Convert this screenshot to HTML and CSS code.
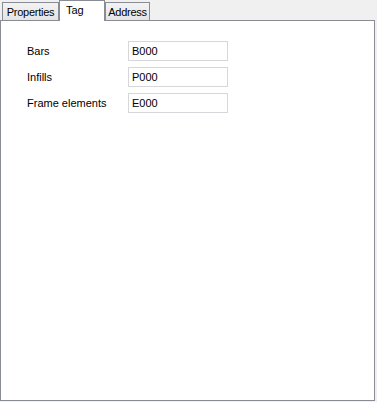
FILE: index.html
```html
<!DOCTYPE html>
<html>
<head>
<meta charset="utf-8">
<link rel="stylesheet" href="styles.css">
</head>
<body>
<div class="tabs">
  <div class="tab tab-props">Properties</div>
  <div class="tab active">Tag</div>
  <div class="tab tab-addr">Address</div>
</div>
<div class="panel">
  <div class="form">
    <label class="lbl">Bars</label><div class="field">B000</div>
    <label class="lbl">Infills</label><div class="field">P000</div>
    <label class="lbl">Frame elements</label><div class="field">E000</div>
  </div>
</div>
</body>
</html>
```
FILE: styles.css
```css
html, body {
  margin: 0;
  padding: 0;
  background: #f0f0f0;
  font-family: Tahoma, "Liberation Sans", Arial, sans-serif;
  font-size: 11px;
  color: #000;
}
.tabs {
  display: flex;
  align-items: flex-end;
  height: 20px;
  padding-left: 2px;
  position: relative;
  z-index: 1;
}
.tab {
  box-sizing: border-box;
  height: 18px;
  border: 1px solid #898c95;
  border-bottom: none;
  background: linear-gradient(#f3f3f3, #e4e4e4);
  padding-top: 2px;
  line-height: 14px;
  text-align: center;
  letter-spacing: -0.25px;
  white-space: nowrap;
}
.tab-props {
  width: 57px;
}
.tab-addr {
  width: 45px;
}
.tab.active {
  width: 46px;
  height: 21px;
  margin-bottom: -1px;
  background: #fff;
  padding: 2px 0 0 6px;
  text-align: left;
  letter-spacing: 0;
}
.panel {
  box-sizing: border-box;
  width: 375px;
  height: 381px;
  border: 1px solid #898c95;
  background: #fff;
}
.form {
  display: grid;
  grid-template-columns: 101px 100px;
  row-gap: 6px;
  padding: 20px 0 0 26px;
  align-items: center;
}
.lbl {
  line-height: 20px;
}
.field {
  box-sizing: border-box;
  height: 20px;
  border: 1px solid #d5d7da;
  padding: 0 3px;
  line-height: 18px;
}
```
